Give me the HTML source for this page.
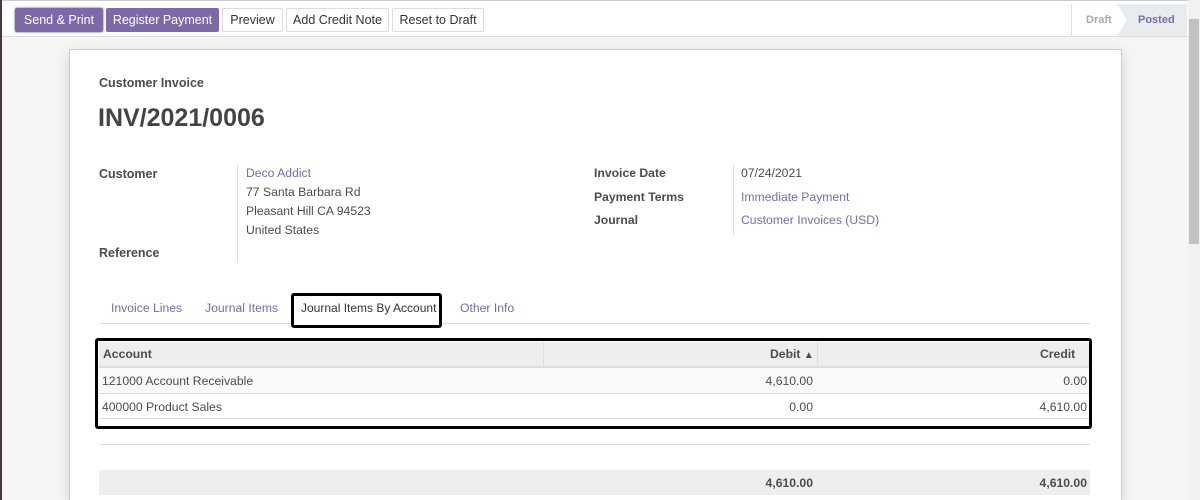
<!DOCTYPE html><html><head><style>
html,body{margin:0;width:1200px;height:500px;overflow:hidden}
body{font-family:"Liberation Sans",sans-serif;font-size:12px;color:#4c4c4c;background:#f5f5f5;position:relative}
.a{position:absolute}
.btn{position:absolute;top:8px;height:24px;line-height:23px;border:1px solid #ddd;border-radius:2px;background:#fff;color:#333;text-align:center;font-size:12.5px;box-sizing:border-box}
.p{background:#7c6aa8;border-color:#7c6aa8;color:#fff}
.lnk{color:#7c6aa8}
</style></head><body>
<div class="a" style="left:0;top:0;width:2px;height:500px;background:#4a3a3a"></div>
<div class="a" style="left:2px;top:0;width:1186px;height:37px;background:#fff;border-bottom:1px solid #ddd;border-top:1px solid #ccc;box-sizing:border-box"></div>
<div class="btn p" style="left:15px;width:88px;box-shadow:0 0 2px #555">Send &amp; Print</div>
<div class="btn p" style="left:106px;width:113px">Register Payment</div>
<div class="btn" style="left:222px;width:61px">Preview</div>
<div class="btn" style="left:286px;width:103px">Add Credit Note</div>
<div class="btn" style="left:392px;width:92px">Reset to Draft</div>
<div class="a" style="left:1071px;top:4px;width:1px;height:33px;background:#ddd"></div>
<div class="a" style="left:1086px;top:14px;color:#aaa;font-weight:bold;font-size:11px">Draft</div>
<svg class="a" style="left:1117px;top:4px" width="70" height="32"><polygon points="0,0 70,0 70,32 0,32 10,16" fill="#e9ecef"/></svg>
<div class="a" style="left:1138px;top:14px;color:#7c6aa8;font-weight:bold;font-size:11px">Posted</div>
<div class="a" style="left:1188px;top:0;width:12px;height:500px;background:#f1f1f1"></div>
<div class="a" style="left:1189px;top:19px;width:10px;height:225px;background:#c1c1c1"></div>
<div class="a" style="left:69px;top:49px;width:1051px;height:451px;background:#fff;border:1px solid #ccc;border-bottom:none;box-shadow:0 4px 12px rgba(0,0,0,.15)"></div>
<div class="a" style="left:99px;top:76px;font-weight:bold;font-size:12.5px">Customer Invoice</div>
<div class="a" style="left:98px;top:104px;font-weight:bold;font-size:25px;color:#444">INV/2021/0006</div>
<div class="a" style="left:99px;top:167px;font-weight:bold;font-size:12.5px">Customer</div>
<div class="a" style="left:99px;top:246px;font-weight:bold;font-size:12.5px">Reference</div>
<div class="a" style="left:237px;top:165px;width:1px;height:97px;background:#ddd"></div>
<div class="a" style="left:246px;top:164px;font-size:12.2px;line-height:19px"><span class="lnk">Deco Addict</span><br>77 Santa Barbara Rd<br>Pleasant Hill CA 94523<br>United States</div>
<div class="a" style="left:594px;top:162px;font-weight:bold;font-size:12.2px;line-height:23.5px">Invoice Date<br>Payment Terms<br>Journal</div>
<div class="a" style="left:733px;top:165px;width:1px;height:70px;background:#ddd"></div>
<div class="a" style="left:741px;top:162px;font-size:12.2px;line-height:23.5px">07/24/2021<br><span class="lnk">Immediate Payment</span><br><span class="lnk">Customer Invoices (USD)</span></div>
<div class="a" style="left:99px;top:323px;width:991px;height:1px;background:#ddd"></div>
<div class="a lnk" style="left:111px;top:301px;font-size:12.2px">Invoice Lines</div>
<div class="a lnk" style="left:205px;top:301px;font-size:12.2px">Journal Items</div>
<div class="a" style="left:291px;top:293px;width:151px;height:35px;border:3px solid #000;border-radius:3px;box-sizing:border-box;background:#fff"></div>
<div class="a" style="left:301px;top:301px;font-size:12px;color:#333">Journal Items By Account</div>
<div class="a lnk" style="left:460px;top:301px;font-size:12.2px">Other Info</div>
<div class="a" style="left:99px;top:342px;width:991px;height:24px;background:#eee;border-bottom:2px solid #ddd"></div>
<div class="a" style="left:543px;top:342px;width:1px;height:24px;background:#ddd"></div>
<div class="a" style="left:817px;top:342px;width:1px;height:24px;background:#ddd"></div>
<div class="a" style="left:103px;top:347px;font-weight:bold;font-size:12.2px">Account</div>
<div class="a" style="left:770px;top:347px;font-weight:bold;font-size:12.2px">Debit <span style="font-size:10px">▲</span></div>
<div class="a" style="left:1040px;top:347px;font-weight:bold;font-size:12.2px">Credit</div>
<div class="a" style="left:99px;top:368px;width:991px;height:25px;background:#fafafa;border-bottom:1px solid #ddd"></div>
<div class="a" style="left:99px;top:394px;width:991px;height:24px;border-bottom:1px solid #ddd"></div>
<div class="a" style="left:102px;top:374px;font-size:12.2px">121000 Account Receivable</div>
<div class="a" style="left:102px;top:400px;font-size:12.2px">400000 Product Sales</div>
<div class="a" style="left:600px;top:374px;width:213px;text-align:right;font-size:12.2px">4,610.00</div>
<div class="a" style="left:600px;top:400px;width:213px;text-align:right;font-size:12.2px">0.00</div>
<div class="a" style="left:850px;top:374px;width:237px;text-align:right;font-size:12.2px">0.00</div>
<div class="a" style="left:850px;top:400px;width:237px;text-align:right;font-size:12.2px">4,610.00</div>
<div class="a" style="left:95px;top:338px;width:997px;height:91px;border:3px solid #000;border-radius:3px;box-sizing:border-box"></div>
<div class="a" style="left:99px;top:444px;width:991px;height:1px;background:#ddd"></div>
<div class="a" style="left:99px;top:470px;width:991px;height:25px;background:#eee"></div>
<div class="a" style="left:600px;top:476px;width:213px;text-align:right;font-size:12.2px;font-weight:bold">4,610.00</div>
<div class="a" style="left:850px;top:476px;width:237px;text-align:right;font-size:12.2px;font-weight:bold">4,610.00</div>
</body></html>
